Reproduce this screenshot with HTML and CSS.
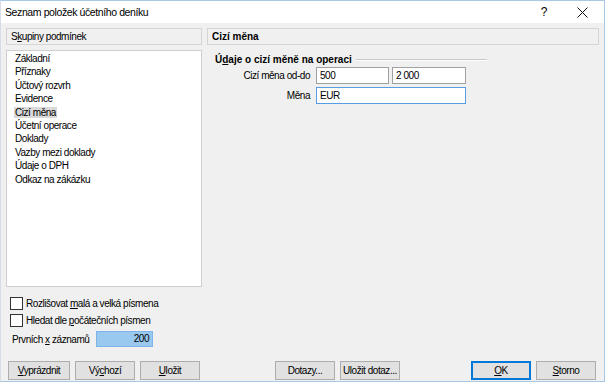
FILE: index.html
```html
<!DOCTYPE html>
<html lang="cs">
<head>
    <meta charset="UTF-8">
    <title>Seznam položek účetního deníku</title>
    <link rel="stylesheet" href="styles.css">
</head>
<body>
    <div class="window">
        <div class="titlebar">
            <span class="title">Seznam položek účetního deníku</span>
            <span class="tb-btn help">?</span>
            <span class="tb-btn close">
                <svg width="11" height="11" viewBox="0 0 11 11"><path d="M0.5 0.5 L10.5 10.5 M10.5 0.5 L0.5 10.5" stroke="#111" stroke-width="1"/></svg>
            </span>
        </div>

        <div class="main">
            <div class="left">
                <div class="header">S<u>k</u>upiny podmínek</div>
                <div class="list">
                    <div class="item">Základní</div>
                    <div class="item">Příznaky</div>
                    <div class="item">Účtový rozvrh</div>
                    <div class="item">Evidence</div>
                    <div class="item"><span class="sel">Cizí měna</span></div>
                    <div class="item">Účetní operace</div>
                    <div class="item">Doklady</div>
                    <div class="item">Vazby mezi doklady</div>
                    <div class="item">Údaje o DPH</div>
                    <div class="item">Odkaz na zákázku</div>
                </div>
                <label class="check"><span class="box"></span><span>Rozlišovat <u>m</u>alá a velká písmena</span></label>
                <label class="check"><span class="box"></span><span>Hledat dle <u>p</u>očátečních písmen</span></label>
                <div class="count">
                    <span class="count-lbl">Prvních <u>x</u> záznamů</span>
                    <span class="count-input">200</span>
                </div>
            </div>

            <div class="right">
                <div class="header bold">Cizí měna</div>
                <div class="group">
                    <div class="group-title"><span>Ú<u>d</u>aje o cizí měně na operaci</span><span class="rule"></span></div>
                    <div class="row">
                        <span class="lbl">Cizí měna od-do</span>
                        <span class="input w73">500</span>
                        <span class="input w74">2 000</span>
                    </div>
                    <div class="row">
                        <span class="lbl">Měna</span>
                        <span class="input wide focus">EUR</span>
                    </div>
                </div>
            </div>
        </div>

        <div class="buttons">
            <div class="btn-group">
                <span class="btn"><span><u>V</u>yprázdnit</span></span>
                <span class="btn"><span>Vý<u>c</u>hozí</span></span>
                <span class="btn"><span><u>U</u>ložit</span></span>
            </div>
            <div class="btn-group mid">
                <span class="btn">Dotazy...</span>
                <span class="btn">Uložit dotaz...</span>
            </div>
            <div class="btn-group end">
                <span class="btn default"><span><u>O</u>K</span></span>
                <span class="btn"><span><u>S</u>torno</span></span>
            </div>
        </div>
    </div>
</body>
</html>
```

FILE: styles.css
```css
body {
    margin: 0;
    background: #ffffff;
    font-family: "Liberation Sans", Arial, sans-serif;
    font-size: 10px;
    letter-spacing: -0.45px;
    color: #000;
}
u {
    text-decoration: underline;
    text-underline-offset: 1px;
}
.window {
    width: 605px;
    height: 382px;
    box-sizing: border-box;
    border: 1px solid #a9c8e6;
    border-left-color: #d6dde4;
    background: #f0f0f0;
    display: flex;
    flex-direction: column;
}
.titlebar {
    height: 22px;
    background: #ffffff;
    display: flex;
    align-items: center;
    padding-left: 4px;
    font-size: 10.5px;
    letter-spacing: -0.4px;
}
.title {
    flex: 1;
}
.tb-btn {
    width: 38px;
    display: flex;
    justify-content: center;
    align-items: center;
}
.help {
    font-size: 12px;
}
.close {
    margin-right: 3px;
}
.main {
    display: flex;
    gap: 5px;
    padding: 5px 5px 0 5px;
    height: 328px;
}
.left {
    width: 196px;
    display: flex;
    flex-direction: column;
}
.right {
    flex: 1;
    display: flex;
    flex-direction: column;
}
.header {
    height: 17px;
    box-sizing: border-box;
    border: 1px solid #d5d5d5;
    background: #f0f0f0;
    padding-left: 4px;
    line-height: 15px;
}
.bold {
    font-weight: bold;
    font-size: 10px;
    letter-spacing: 0;
}
.list {
    margin-top: 5px;
    height: 237px;
    box-sizing: border-box;
    border: 1px solid #cfcfcf;
    background: #ffffff;
    padding: 1px 0 0 8px;
}
.item {
    height: 13.4px;
    line-height: 13px;
}
.sel {
    background: #d9d9d9;
    padding: 0 1px;
    margin-left: -1px;
}
.check {
    display: flex;
    align-items: center;
    height: 13px;
    margin-left: 4px;
}
.check:first-of-type {
    margin-top: 10px;
}
.check + .check {
    margin-top: 4px;
}
.box {
    width: 11px;
    height: 11px;
    border: 1px solid #333;
    background: #fff;
    margin-right: 3px;
}
.count {
    display: flex;
    align-items: center;
    margin-top: 4px;
    padding-left: 6px;
}
.count-lbl {
    width: 84px;
}
.count-input {
    width: 57px;
    height: 16px;
    box-sizing: border-box;
    background: #99c9ef;
    border: 1px solid #7eb4ea;
    text-align: right;
    padding-right: 3px;
    line-height: 14px;
}
.group {
    padding: 9px 0 0 8px;
}
.group-title {
    display: flex;
    align-items: center;
    font-weight: bold;
    font-size: 10px;
    letter-spacing: 0;
    width: 272px;
}
.rule {
    flex: 1;
    height: 0;
    border-top: 1px solid #c8c8c8;
    border-bottom: 1px solid #fff;
    margin-left: 4px;
}
.row {
    display: flex;
    align-items: center;
    margin-top: 3px;
}
.group-title + .row {
    margin-top: 2px;
}
.lbl {
    width: 95px;
    text-align: right;
    margin-right: 6px;
}
.input {
    height: 17px;
    box-sizing: border-box;
    border: 1px solid #a0a0a0;
    background: #fff;
    padding-left: 3px;
    line-height: 15px;
    margin-right: 3px;
}
.w73 {
    width: 73px;
}
.w74 {
    width: 74px;
}
.wide {
    width: 150px;
}
.focus {
    border-color: #569de5;
}
.buttons {
    display: flex;
    padding: 5px 8px 0 7px;
}
.btn-group {
    display: flex;
    gap: 5px;
}
.mid {
    margin-left: 75px;
}
.end {
    margin-left: auto;
}
.btn {
    width: 60px;
    height: 19px;
    box-sizing: border-box;
    border: 1px solid #adadad;
    background: #e1e1e1;
    display: flex;
    justify-content: center;
    align-items: center;
    white-space: nowrap;
}
.btn-group:first-child .btn:first-child {
    width: 62px;
}
.default {
    border: 2px solid #0078d7;
}
```
